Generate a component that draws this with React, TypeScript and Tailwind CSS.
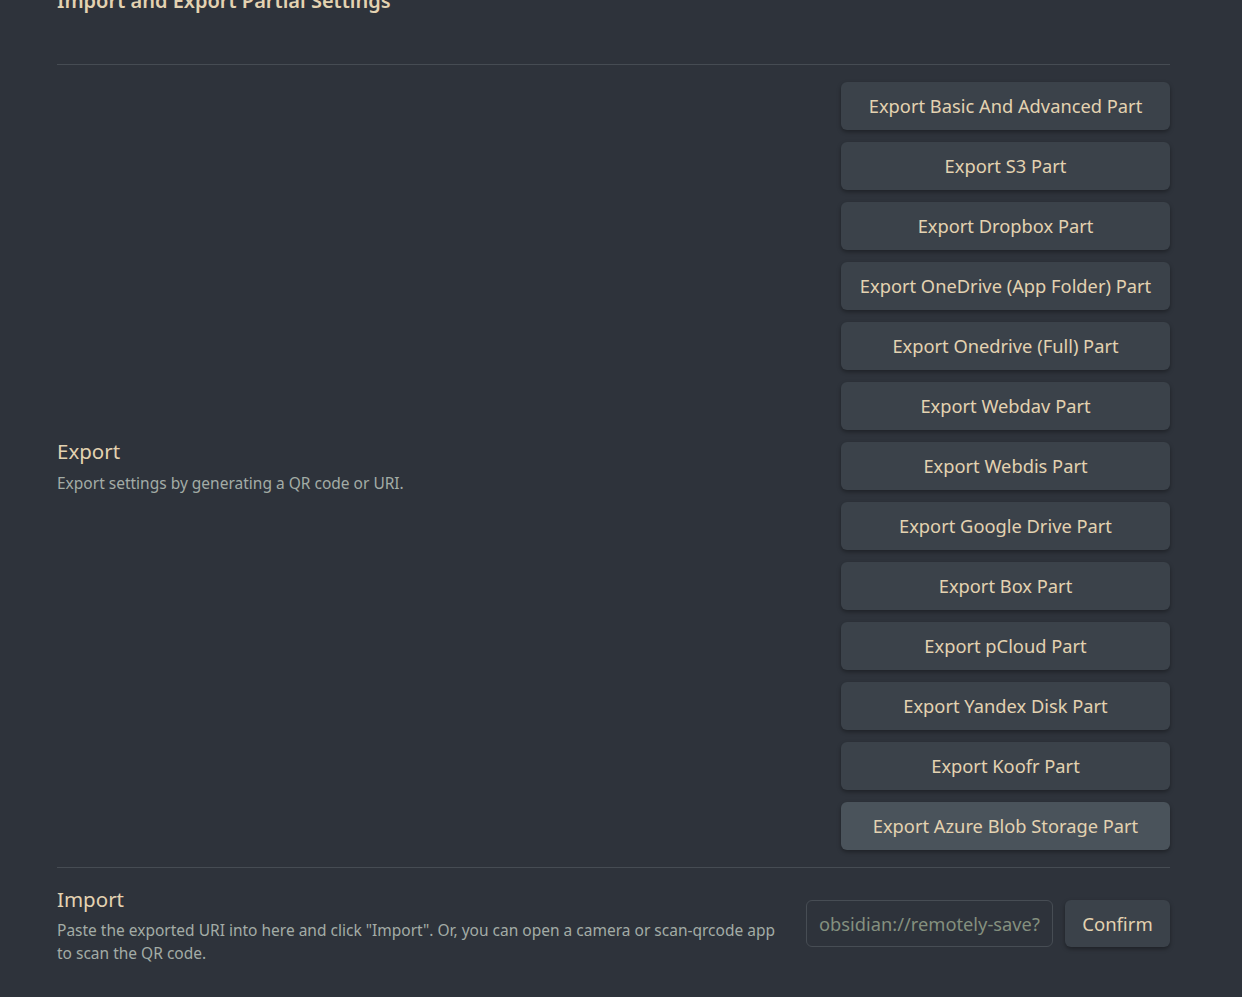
import React from "react";

const parts = [
  "Export Basic And Advanced Part",
  "Export S3 Part",
  "Export Dropbox Part",
  "Export OneDrive (App Folder) Part",
  "Export Onedrive (Full) Part",
  "Export Webdav Part",
  "Export Webdis Part",
  "Export Google Drive Part",
  "Export Box Part",
  "Export pCloud Part",
  "Export Yandex Disk Part",
  "Export Koofr Part",
  "Export Azure Blob Storage Part",
];

const App: React.FC = () => {
  return (
    <div
      className="min-h-[997px] bg-[#2e333b] pl-[57px] pr-[72px] text-[#e3d2b1]"
      style={{ fontFamily: '"Noto Sans", "Open Sans", sans-serif' }}
    >
      <div className="flex h-[65px] border-b border-[#464c53]">
        <h2 className="-mt-[12px] text-[20px] font-semibold leading-[26px]">
          Import and Export Partial Settings
        </h2>
      </div>

      {/* export */}
      <div className="flex items-center justify-between gap-6 border-b border-[#464c53] pt-[17px] pb-[17px]">
        <div>
          <div className="text-[20.5px] leading-[26px]">Export</div>
          <div className="mt-[8px] text-[15.5px] leading-[23px] text-[#a3aca6]">
            Export settings by generating a QR code or URI.
          </div>
        </div>
        <div className="flex w-[329px] flex-col gap-[12px]">
          {parts.map((p, i) => (
            <button
              key={i}
              className={
                "h-[48px] rounded-[6px] text-[18.3px] text-[#e3d2b1] shadow-[0_2px_4px_rgba(0,0,0,0.35)] " +
                (i === parts.length - 1 ? "bg-[#4a535b]" : "bg-[#3b424a]")
              }
            >
              {p}
            </button>
          ))}
        </div>
      </div>

      {/* import */}
      <div className="flex items-start justify-between gap-6 pt-[18px]">
        <div className="max-w-[725px]">
          <div className="text-[20.5px] leading-[26px]">Import</div>
          <div className="mt-[7px] text-[15.5px] leading-[23px] text-[#a3aca6]">
            Paste the exported URI into here and click "Import". Or, you can open a camera or
            scan-qrcode app to scan the QR code.
          </div>
        </div>
        <div className="mt-[14px] flex shrink-0 gap-[12px]">
          <input
            placeholder="obsidian://remotely-save?"
            className="h-[47px] w-[247px] rounded-[6px] border border-[#474d54] bg-transparent px-[12px] text-[18.3px] text-[#e3d2b1] outline-none placeholder:text-[#84907f]"
          />
          <button className="h-[47px] w-[105px] rounded-[6px] bg-[#3b424a] text-[18.5px] text-[#e3d2b1] shadow-[0_2px_4px_rgba(0,0,0,0.35)]">
            Confirm
          </button>
        </div>
      </div>
    </div>
  );
};

export default App;
